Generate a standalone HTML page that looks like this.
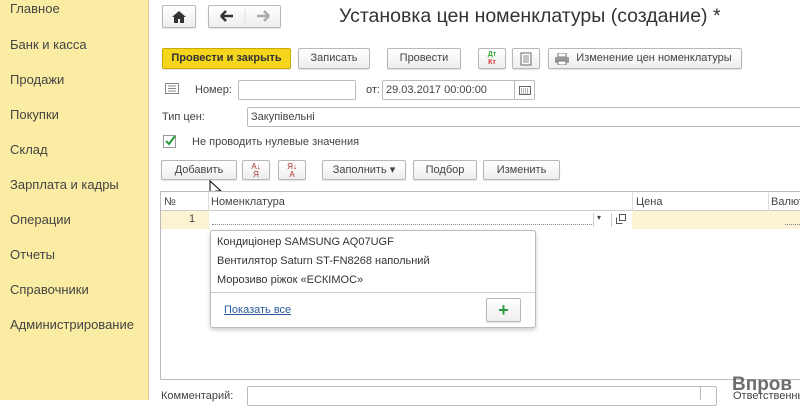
<!DOCTYPE html>
<html><head><meta charset="utf-8"><style>
*{box-sizing:border-box;margin:0;padding:0}
body{width:800px;height:400px;overflow:hidden;background:#fff;font-family:"Liberation Sans",sans-serif;font-size:11px;color:#444;position:relative}
.a{position:absolute}
.side{left:0;top:0;width:149px;height:400px;background:#fbeca3;border-right:1px solid #d8cc90}
.side div{position:absolute;left:10px;font-size:13px;color:#444}
.btn{position:absolute;border:1px solid #b8b8b8;border-radius:2px;background:linear-gradient(#fff,#eee);text-align:center;color:#444;font-size:11px;box-shadow:0 1px 1px rgba(0,0,0,.12)}
.inp{position:absolute;border:1px solid #bbb;border-radius:2px;background:#fff;font-size:11px;color:#444;padding-left:3px}
.t{position:absolute;font-size:11px;color:#444;white-space:nowrap}
</style></head><body>
<div class="a side">
<div style="top:1px">Главное</div><div style="top:37px">Банк и касса</div><div style="top:72px">Продажи</div><div style="top:107px">Покупки</div><div style="top:142px">Склад</div><div style="top:177px">Зарплата и кадры</div><div style="top:212px">Операции</div><div style="top:247px">Отчеты</div><div style="top:282px">Справочники</div><div style="top:317px">Администрирование</div>
</div>
<div class="btn" style="left:162px;top:5px;width:34px;height:23px;line-height:21px;font-size:14px;color:#333">
<svg width="14" height="12" viewBox="0 0 14 12" style="margin-top:5px"><path d="M7 0L0 6h2v6h4V8h2v4h4V6h2z" fill="#333"/></svg></div>
<div class="btn" style="left:208px;top:5px;width:73px;height:23px"><svg width="73" height="21"><path d="M12 10h12M12 10l5-5M12 10l5 5" stroke="#333" stroke-width="2.5" fill="none"/><line x1="36" y1="3" x2="36" y2="18" stroke="#ddd"/><path d="M48 10h12M60 10l-5-5M60 10l-5 5" stroke="#aaa" stroke-width="2.5" fill="none"/></svg></div>
<div class="t" style="left:339px;top:5px;font-size:19.5px;color:#333">Установка цен номенклатуры (создание) *</div>
<div class="btn" style="left:162px;top:48px;width:129px;height:21px;line-height:19px;background:#f5d61c;border-color:#c9ab00;font-weight:bold;color:#333">Провести и закрыть</div>
<div class="btn" style="left:298px;top:48px;width:72px;height:21px;line-height:19px">Записать</div>
<div class="btn" style="left:387px;top:48px;width:74px;height:21px;line-height:19px">Провести</div>
<div class="btn" style="left:478px;top:48px;width:28px;height:21px;font-size:7px;line-height:8px;padding-top:2px;font-weight:bold"><span style="color:#3a3">Дт</span><br><span style="color:#c33">Кт</span></div>
<div class="btn" style="left:512px;top:48px;width:28px;height:21px"><svg width="12" height="14" style="margin-top:3px"><rect x="1" y="1" width="10" height="12" fill="#fff" stroke="#666"/><path d="M3 4h6M3 6h6M3 8h6M3 10h6" stroke="#888"/></svg></div>
<div class="btn" style="left:548px;top:48px;width:194px;height:21px;line-height:19px;padding-left:18px">Изменение цен номенклатуры
<svg width="14" height="12" style="position:absolute;left:6px;top:4px"><rect x="3" y="0" width="8" height="4" fill="#fff" stroke="#777"/><rect x="0" y="4" width="14" height="6" rx="1" fill="#999"/><rect x="3" y="8" width="8" height="4" fill="#fff" stroke="#777"/></svg></div>
<svg class="a" style="left:165px;top:83px" width="14" height="11"><rect x=".5" y=".5" width="13" height="10" fill="#fff" stroke="#888"/><path d="M3 3h8M3 5.5h8M3 8h8" stroke="#888"/></svg>
<div class="t" style="left:195px;top:84px">Номер:</div>
<div class="inp" style="left:238px;top:80px;width:118px;height:20px"></div>
<div class="t" style="left:366px;top:84px">от:</div>
<div class="inp" style="left:382px;top:80px;width:153px;height:20px;line-height:18px">29.03.2017 00:00:00</div>
<div class="a" style="left:514px;top:80px;width:1px;height:20px;background:#bbb"></div>
<svg class="a" style="left:519px;top:86px" width="12" height="9"><rect x=".5" y=".5" width="11" height="8" fill="#fff" stroke="#666"/><path d="M2 3h8M2 5h8M2 7h8" stroke="#666" stroke-dasharray="1 1"/></svg>
<div class="t" style="left:162px;top:111px">Тип цен:</div>
<div class="inp" style="left:247px;top:107px;width:560px;height:20px;line-height:18px">Закупівельні</div>
<div class="a" style="left:163px;top:135px;width:13px;height:13px;border:1px solid #999;background:#fff"></div>
<svg class="a" style="left:164px;top:135px" width="12" height="12"><path d="M2 6l3 3 6-8" stroke="#2a9a3a" stroke-width="2" fill="none"/></svg>
<div class="t" style="left:192px;top:136px">Не проводить нулевые значения</div>
<div class="btn" style="left:161px;top:160px;width:76px;height:20px;line-height:18px">Добавить</div>
<div class="btn" style="left:242px;top:160px;width:28px;height:20px;font-size:8px;line-height:8px;padding-top:2px;color:#a33">А↓<br>Я</div>
<div class="btn" style="left:278px;top:160px;width:28px;height:20px;font-size:8px;line-height:8px;padding-top:2px;color:#a33">Я↓<br>А</div>
<div class="btn" style="left:322px;top:160px;width:84px;height:20px;line-height:18px">Заполнить ▾</div>
<div class="btn" style="left:413px;top:160px;width:64px;height:20px;line-height:18px">Подбор</div>
<div class="btn" style="left:483px;top:160px;width:77px;height:20px;line-height:18px">Изменить</div>
<svg class="a" style="left:209px;top:180px" width="14" height="20"><path d="M1 1v15l4-4 3 6 2-1-3-6h5z" fill="#fff" stroke="#000"/></svg>
<div class="a" style="left:160px;top:191px;width:650px;height:189px;border:1px solid #bbb;background:#fff"></div>
<div class="a" style="left:161px;top:192px;width:640px;height:19px;border-bottom:1px solid #ccc"></div>
<div class="a" style="left:208px;top:192px;width:1px;height:19px;background:#ddd"></div>
<div class="a" style="left:632px;top:192px;width:1px;height:19px;background:#ddd"></div>
<div class="a" style="left:768px;top:192px;width:1px;height:19px;background:#ddd"></div>
<div class="t" style="left:164px;top:196px">№</div>
<div class="t" style="left:211px;top:196px">Номенклатура</div>
<div class="t" style="left:636px;top:196px">Цена</div>
<div class="t" style="left:771px;top:196px">Валюта</div>
<div class="a" style="left:161px;top:211px;width:48px;height:18px;background:#fbf3d2"></div>
<div class="t" style="left:189px;top:213px">1</div>
<div class="a" style="left:212px;top:224px;width:380px;border-top:1px dotted #888"></div>
<div class="a" style="left:593px;top:213px;width:1px;height:14px;background:#ccc"></div>
<div class="t" style="left:597px;top:213px;font-size:8px">▾</div>
<div class="a" style="left:611px;top:213px;width:1px;height:14px;background:#ccc"></div>
<svg class="a" style="left:616px;top:214px" width="10" height="10"><rect x="3.5" y=".5" width="6" height="6" fill="none" stroke="#555"/><path d="M.5 3.5v6h6" fill="none" stroke="#555"/></svg>
<div class="a" style="left:632px;top:211px;width:170px;height:18px;background:#fcf4d4"></div>
<div class="a" style="left:785px;top:224px;width:15px;border-top:1px dotted #888"></div>
<div class="a" style="left:210px;top:230px;width:326px;height:98px;border:1px solid #bbb;border-radius:3px;background:#fff;box-shadow:0 2px 4px rgba(0,0,0,.2)"></div>
<div class="t" style="left:217px;top:236px;color:#333">Кондиціонер SAMSUNG AQ07UGF</div>
<div class="t" style="left:217px;top:255px;color:#333">Вентилятор Saturn ST-FN8268 напольний</div>
<div class="t" style="left:217px;top:274px;color:#333">Морозиво ріжок «ЕСКІМОС»</div>
<div class="a" style="left:211px;top:292px;width:324px;height:1px;background:#ccc"></div>
<div class="t" style="left:224px;top:304px;color:#2a5a9a;text-decoration:underline">Показать все</div>
<div class="btn" style="left:486px;top:298px;width:35px;height:24px;line-height:22px;font-size:18px;font-weight:bold;color:#2a9a3a">+</div>
<div class="a" style="left:149px;top:380px;width:651px;height:20px;background:#fff"></div>
<div class="t" style="left:161px;top:390px">Комментарий:</div>
<div class="inp" style="left:247px;top:386px;width:470px;height:20px"></div>
<div class="a" style="left:700px;top:386px;width:1px;height:14px;background:#bbb"></div>
<div class="t" style="left:733px;top:390px">Ответственный:</div>
<div class="t" style="left:732px;top:374px;font-size:19px;font-weight:bold;color:#555;opacity:.85">Впров</div>
</body></html>
